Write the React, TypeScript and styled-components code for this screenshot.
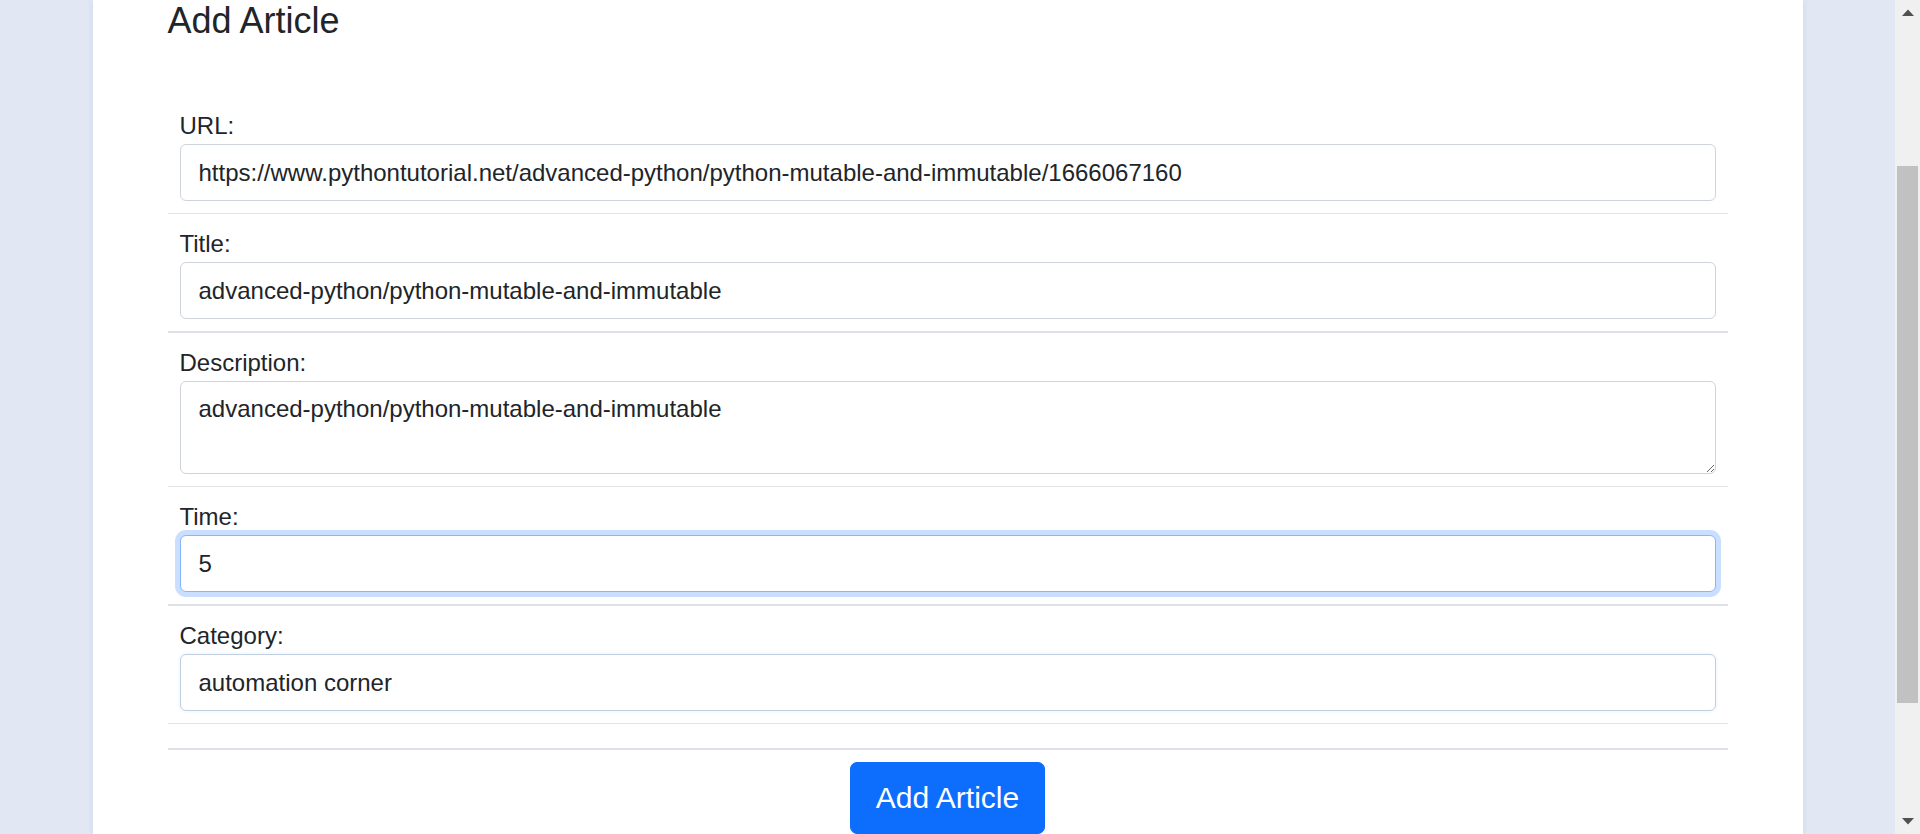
import React from "react";
import styled, { createGlobalStyle, css } from "styled-components";

const GlobalStyle = createGlobalStyle`
  html, body {
    margin: 0;
    padding: 0;
    height: 100%;
    overflow: hidden;
    background: #e1e8f4;
    font-family: "Liberation Sans", Arial, sans-serif;
    color: #212529;
  }
  * { box-sizing: border-box; }
`;

const Page = styled.div`
  display: flex;
  height: 834px;
  width: 1920px;
`;

const Main = styled.main`
  flex: 1;
  display: flex;
  justify-content: center;
  overflow: hidden;
`;

const Card = styled.section`
  width: 1710px;
  min-height: 100%;
  background: #ffffff;
  box-shadow: 0 0 6px rgba(40, 70, 140, 0.1);
  padding: 0 75px;
  display: flex;
  flex-direction: column;
`;

const Heading = styled.h4`
  margin: -1px 0 54px;
  font-size: 36px;
  line-height: 43px;
  font-weight: 400;
  color: #212529;
`;

const FieldList = styled.div`
  display: flex;
  flex-direction: column;
`;

const FieldRow = styled.div<{ $thick?: boolean; $empty?: boolean }>`
  padding: 12px;
  border-bottom: ${(p) => (p.$thick ? "2px" : "1px")} solid
    ${(p) => (p.$thick ? "#dee2e6" : "#e3e4e6")};
  ${(p) =>
    p.$empty &&
    css`
      height: ${p.$thick ? 26 : 25}px;
    `}
`;

const Label = styled.label`
  display: block;
  font-size: 24px;
  line-height: 36px;
  color: #212529;
`;

const fieldBase = css<{ $state?: "focus" | "fading" }>`
  display: block;
  width: 100%;
  font-family: "Liberation Sans", Arial, sans-serif;
  font-size: 24px;
  color: #212529;
  background: #fff;
  border: 1px solid #ced4da;
  border-radius: 6px;
  outline: none;
  ${(p) =>
    p.$state === "focus" &&
    css`
      border-color: #86b7fe;
      box-shadow: 0 0 0 5px rgba(13, 110, 253, 0.22);
    `}
  ${(p) =>
    p.$state === "fading" &&
    css`
      border-color: #bfcfdf;
      box-shadow: 0 0 0 2px rgba(13, 110, 253, 0.03);
    `}
`;

const TextInput = styled.input<{ $state?: "focus" | "fading" }>`
  ${fieldBase};
  height: 57px;
  padding: 0 18px;
  line-height: 55px;
`;

const TextArea = styled.textarea<{ $state?: "focus" | "fading" }>`
  ${fieldBase};
  height: 93px;
  padding: 9px 18px;
  line-height: 36px;
  resize: vertical;
`;

const ButtonBar = styled.div`
  display: flex;
  justify-content: center;
  padding-top: 12px;
`;

const PrimaryButton = styled.button`
  height: 72px;
  padding: 0 25px;
  font-family: "Liberation Sans", Arial, sans-serif;
  font-size: 30px;
  line-height: 70px;
  color: #fff;
  background: #0d6efd;
  border: 1px solid #0d6efd;
  border-radius: 7px;
  cursor: pointer;
`;

const Scrollbar = styled.div`
  width: 25px;
  flex: none;
  background: #f0f0f0;
  display: flex;
  flex-direction: column;
`;

const ArrowButton = styled.div`
  height: 25px;
  display: flex;
  align-items: center;
  justify-content: center;
  flex: none;
`;

const Track = styled.div<{ $offset: number }>`
  flex: 1;
  padding: ${(p) => p.$offset}px 2px 0;
`;

const Thumb = styled.div<{ $size: number }>`
  height: ${(p) => p.$size}px;
  background: #c1c1c1;
`;

const Arrow = ({ down }: { down?: boolean }) => (
  <svg width="12" height="7" viewBox="0 0 12 7">
    <polygon
      points={down ? "0,0 12,0 6,6.5" : "6,0.5 12,7 0,7"}
      fill="#505050"
    />
  </svg>
);

type Field = {
  label: string;
  value: string;
  multiline?: boolean;
  state?: "focus" | "fading";
};

const fields: Field[] = [
  {
    label: "URL:",
    value:
      "https://www.pythontutorial.net/advanced-python/python-mutable-and-immutable/1666067160",
  },
  { label: "Title:", value: "advanced-python/python-mutable-and-immutable" },
  {
    label: "Description:",
    value: "advanced-python/python-mutable-and-immutable",
    multiline: true,
  },
  { label: "Time:", value: "5", state: "focus" },
  { label: "Category:", value: "automation corner", state: "fading" },
];

export default function App() {
  return (
    <>
      <GlobalStyle />
      <Page>
        <Main>
          <Card>
            <Heading>Add Article</Heading>
            <FieldList>
              {fields.map((f, i) => {
                const id = `field-${i}`;
                return (
                  <FieldRow key={f.label} $thick={i % 2 === 1}>
                    <Label htmlFor={id}>{f.label}</Label>
                    {f.multiline ? (
                      <TextArea id={id} defaultValue={f.value} $state={f.state} />
                    ) : (
                      <TextInput id={id} defaultValue={f.value} $state={f.state} />
                    )}
                  </FieldRow>
                );
              })}
              <FieldRow $thick $empty />
            </FieldList>
            <ButtonBar>
              <PrimaryButton type="button">Add Article</PrimaryButton>
            </ButtonBar>
          </Card>
        </Main>
        <Scrollbar>
          <ArrowButton>
            <Arrow />
          </ArrowButton>
          <Track $offset={141}>
            <Thumb $size={537} />
          </Track>
          <ArrowButton>
            <Arrow down />
          </ArrowButton>
        </Scrollbar>
      </Page>
    </>
  );
}
